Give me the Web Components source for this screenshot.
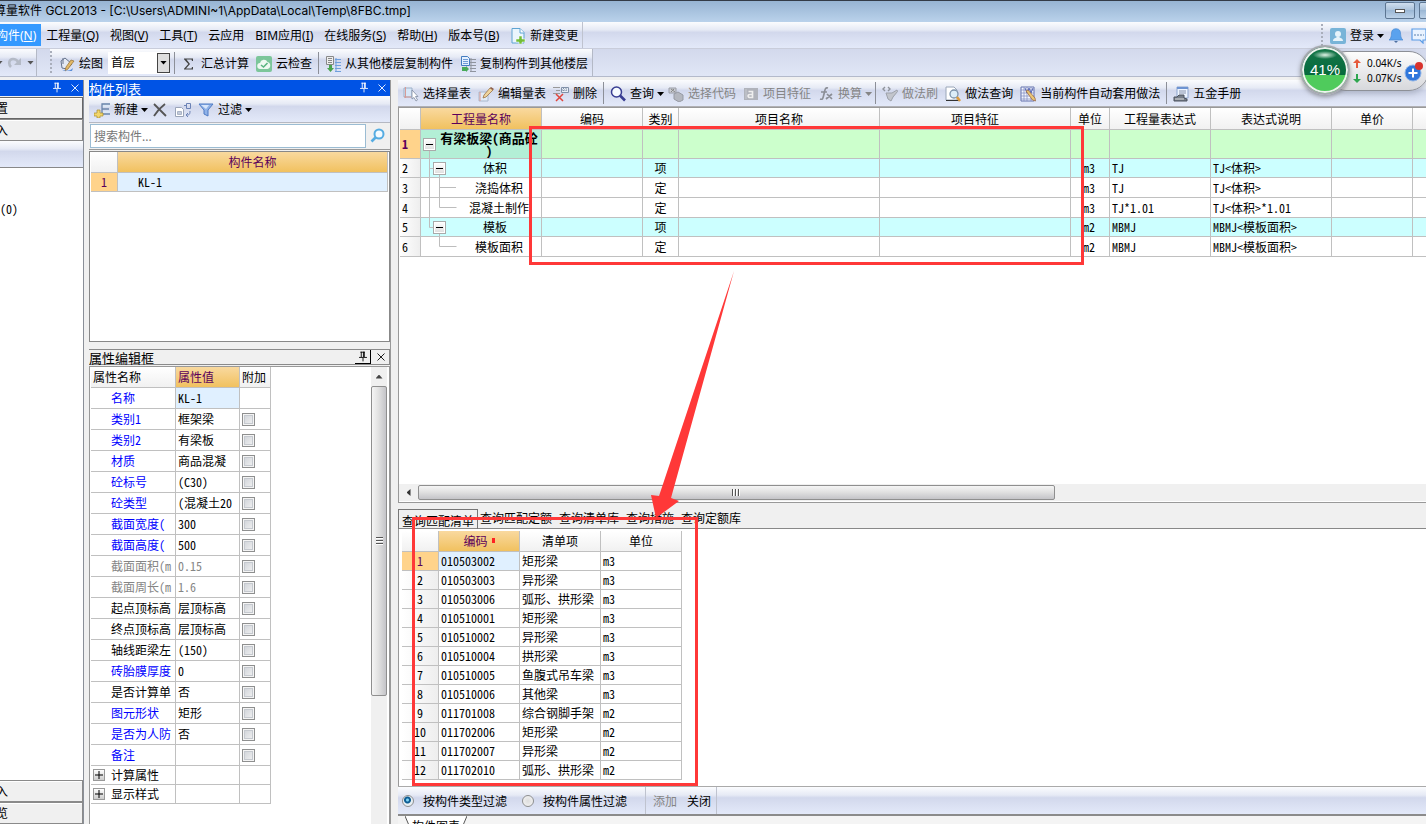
<!DOCTYPE html>
<html lang="zh-CN">
<head>
<meta charset="utf-8">
<title>算量软件 GCL2013</title>
<style>
html,body{margin:0;height:100%}
body{
  --ui:"Noto Sans","Noto Sans CJK SC",sans-serif;
  --song:"Noto Sans Mono CJK SC","Noto Sans CJK SC",monospace;
  --line:#c0c0c0;
  --gold:linear-gradient(#f9d99f,#f1c15f);
  --head:linear-gradient(#fff,#f1f1f1);
  --bar:linear-gradient(#fbfcfe 0,#e6eaf5 30%,#d2d8ec 40%,#dbe1f3 70%,#e3e9f9 100%);
  font:12px/16px var(--ui);color:#000;background:#f0f0f0;overflow:hidden}
</style>
</head>
<body>
<gcl-app></gcl-app>
<script>
const ICONS={
paint:'<path d="M2 5l4-3 7 6-5 5-5-1z" fill="#e4e9f3" stroke="#66738c"/><path d="M4 8V2" stroke="#66738c"/><path d="M12 4l3 1-6 8-3 2 1-4z" fill="#e3b968" stroke="#936f33" stroke-width=".7"/><path d="M2 13c3 2 8 3 12-1l-1 3H5z" fill="#5c8fd8"/>',
sigma:'<path d="M3 2.500h9v2.500h-1l-.5-1.500H5.500L9 8l-4 4.500h5.500l.5-1.500h1v2.500H3v-.8L7.300 8 3 3.300z" fill="#444"/>',
cloud:'<rect width="16" height="16" rx="2" fill="#7cc69a"/><path d="M4.500 13a3 3 0 0 1-.5-6 4 4 0 0 1 7.500-1 3.600 3.600 0 0 1 0 7z" fill="#eef9f1"/><path d="M5 9l2.500 2 4-4" fill="none" stroke="#5ab580" stroke-width="1.600"/>',
copyfrom:'<path d="M1.500 .500h7v8h-7z" fill="#eee" stroke="#888"/><path d="M3 2.500h4M3 4.500h4M3 6.500h4" stroke="#888"/><path d="M4 9h3v3h2l-3.500 4L2 12h2z" fill="#4aa34e"/><path d="M10 3.500h6M10 6.500h6M10 9.500h6M10 12.500h6M10 15.500h6M11 2v14" stroke="#6f9fdc"/>',
copyto:'<path d="M1.500 .500h6l2 2v7h-8z" fill="#e4f0ff" stroke="#437cc0"/><path d="M3 3.500h5M3 5.500h5M3 7.500h5" stroke="#6f9bd6"/><path d="M2 11h4v-1l3 3-3 3v-1H2z" fill="#48aa58"/><path d="M10 3.500h6M10 6.500h6M10 9.500h6M10 12.500h6M10 15.500h6M11 2v14" stroke="#8f949e"/>',
newdoc:'<path d="M2 .500h8l4 4V15H2z" fill="#eaf5fd" stroke="#5fa4d2"/><path d="M10 .500V5h4" fill="#fff" stroke="#5fa4d2"/><path d="M9 8h3v3h3v3h-3v2H9v-2H6v-3h3z" fill="#73bd38" stroke="#fff" stroke-width=".5"/>',
redo:'<path d="M4 12C1 9 2 4 6 4c3 0 4 1 5 3" fill="none" stroke="#b4bac6" stroke-width="2.600"/><path d="M14 3v7H7z" fill="#b4bac6"/>',
newitem:'<path d="M8 1h8v4H8zM8 9h8v4H8z" fill="#dbe7f5"/><path d="M16 2H8v10h8M8 7h7" fill="none" stroke="#6b85aa" stroke-width="1.300"/><path d="M3 8h3v3h3v3H6v2H3v-2H0v-3h3z" fill="#f2d66b" stroke="#ab8d2e" stroke-width=".7"/>',
del:'<path d="M2 2l12 12M13 2C9 5 5 9 2 14" stroke="#555" stroke-width="1.800" fill="none"/>',
copydoc:'<path d="M.500 5.500h6l2 2v7h-8z" fill="#fff" stroke="#9aa4b8"/><path d="M2.500 9.500h4v3h-4z" fill="#c2cada" stroke="#aab4c6"/><path d="M11.500 1.500h4v5h-4zM11 3.500H9M15 9c0 4-1 4-4 4m2-2l-2 2 2 2" fill="none" stroke="#6c83b6"/>',
funnel:'<path d="M1 2h14L10 8v6l-4-2V8z" fill="#8fb2e8" stroke="#4f7bc4"/><path d="M3 3h8L8 7z" fill="#d6e5fb"/>',
selq:'<path d="M1 2h8v9H1z" fill="#d7e6f7" stroke="#9db0c8"/><path d="M2.500 1v11M1 11h7" stroke="#d79b97" fill="none"/><path d="M9 4v9l2-1.500 2 3.500 1.500-1-2-3.500H15z" fill="#fff" stroke="#7e89a0" stroke-width=".8"/>',
edit:'<path d="M1 6h9v9H1z" fill="#e1ebf7" stroke="#aab8cc"/><path d="M2 6v9" stroke="#dd9891"/><path d="M6 9l6-7 3 2-7 7-3 1z" fill="#efd49d" stroke="#9b7245" stroke-width=".8"/><path d="M12 2l1-1 3 2-1 1z" fill="#8b5a45"/>',
rowdel:'<path d="M0 1.500h7M3 4.500h4M0 7.500h7" stroke="#999"/><path d="M8.500 1.500h7v5h-7z" fill="#e8eef6" stroke="#8190a7"/><path d="M9 4h6M10.500 2v4M13 2v4" stroke="#8190a7" stroke-dasharray="1 1"/><path d="M3 8l7 7M10 8l-7 7" stroke="#e0453d" stroke-width="1.500"/>',
search:'<circle cx="6.500" cy="6" r="5" fill="#f6fbff" stroke="#383d92" stroke-width="1.500"/><path d="M10 9.500l5 5" stroke="#383d92" stroke-width="2.600"/>',
code:'<path d="M1 2h7v5H1z" fill="#c9ccd3" stroke="#9a9da6"/><path d="M3 3l4 3M6 3L3 6" stroke="#888"/><path d="M6 8l4-2 5 3v5l-4 2-5-3z" fill="#b4b7bf" stroke="#969aa4"/>',
feature:'<path d="M1 2h14v12H1z" fill="#b0b3bb"/><path d="M5.500 5.500h4v6H7c-2.500 0-2.500-3 0-3h2.500" fill="none" stroke="#eee" stroke-width="1.700"/><path d="M3 3v10" stroke="#c7cad0"/>',
fx:'<path d="M10 2C7 1 7 4 6 8s-1 6-4 5M3 6h6M9 8l5 5M14 8l-6 5" fill="none" stroke="#8b8e96" stroke-width="1.700"/>',
brush:'<path d="M3 1L1 3l2 2M6 1l2 2-2 2" fill="none" stroke="#8f939b" stroke-width="1.400"/><path d="M4 7h6l5-3 .5 1.500L11 11l-2 4-3-2z" fill="#c2c5cc" stroke="#9da1aa"/>',
docfind:'<path d="M1 1h8l3 3v10H1z" fill="#fff" stroke="#9aa6b8"/><path d="M1 14.500h13" stroke="#333"/><circle cx="9" cy="8" r="4" fill="#dcedf8" stroke="#7c93ab" stroke-width="1.300"/><path d="M12 11l3 4" stroke="#dc9b3d" stroke-width="2.500"/>',
auto:'<path d="M1 1h13v14H1z" fill="#f3f6ff" stroke="#6572ad"/><path d="M1 4h13M1 7h13M1 10h13M1 13h13M4 1v14M7 1v14M11 1v14" stroke="#7b88bd" stroke-width=".7"/><path d="M5 2l2 5 2-5 2 5 2-5" stroke="#5767b5" fill="none"/><path d="M6 5l2-1 7 8 .5 3-3-1z" fill="#eac774" stroke="#9a6848" stroke-width=".8"/>',
manual:'<path d="M4 1h11v11H4z" fill="#edf4ff" stroke="#8ca4cc"/><path d="M4 2h11" stroke="#6d93d2" stroke-width="2"/><path d="M6 5h7M6 7h7" stroke="#8792aa"/><path d="M1 11h3l2-2h5v3l3 1v2H1z" fill="#777f89" stroke="#4c535e"/><path d="M2 13h9" stroke="#ddd"/>',
user:'<rect width="16" height="16" rx="2" fill="#78b4d8"/><circle cx="8" cy="6" r="3" fill="#e6f3fa"/><path d="M3 13c0-3 3-3 4-4h2c1 1 4 1 4 4z" fill="#e6f3fa"/>',
bell:'<path d="M1 12c3-2 2-7 3-9 1-3 7-3 8 0 1 2 0 7 3 9z" fill="#5aa2ee" stroke="#4a8bd2" stroke-width=".7"/><path d="M6 13h4l-2 2z" fill="#4d6fa0"/>',
chat:'<path d="M1 1h14v11h-3v3l-3-3H1z" fill="#e9f3ff" stroke="#5b9ce6" stroke-width="1.200"/><path d="M3 7h10" stroke="#5b80ae" stroke-dasharray="2 1"/>',
find:'<circle cx="9" cy="6" r="4.500" fill="#f3faff" stroke="#55ace2" stroke-width="2"/><path d="M6 9l-4.500 4.500" stroke="#55ace2" stroke-width="2.600"/>',
pin:'<path d="M5 2.500h5M6 2v6M9.500 2v6M8.500 2v6M3.500 8.500h9M8 9v4" fill="none" stroke="currentColor"/>',
close:'<path d="M4 4l8 8M12 4l-8 8" stroke="currentColor" fill="none"/>'
};
const svg=(n,s=16)=>`<svg width="${s}" height="${s}" viewBox="0 0 16 16" aria-hidden="true">${ICONS[n]}</svg>`;
const RESET=`<style>*{box-sizing:border-box}button,input,select{font:inherit;color:inherit;margin:0;padding:0;border:0;background:none}svg{display:block;flex:none}:host{display:block}</style>`;
function define(name,render){
  customElements.define(name,class extends HTMLElement{
    connectedCallback(){
      if(this.shadowRoot)return;
      const t=document.createElement('template');
      t.innerHTML=RESET+render(this);
      this.attachShadow({mode:'open'}).append(t.content.cloneNode(true));
    }
  });
}

define('tool-button',el=>`<style>
:host{flex:none}
button{display:flex;align-items:center;gap:4px;height:22px;padding-top:2px;white-space:nowrap}
button:disabled{color:#858585}
i{width:7px;height:4px;margin:0 -3px 0 -1px;background:currentColor;clip-path:polygon(0 0,100% 0,50% 100%)}
</style><button ${el.hasAttribute('off')?'disabled':''} ${el.hasAttribute('label')?`aria-label="${el.getAttribute('label')}"`:''}>${svg(el.getAttribute('icon'))}<slot></slot>${el.hasAttribute('caret')?'<i></i>':''}</button>`);

define('tool-sep',()=>`<style>:host{flex:none;width:1px;height:22px;background:#8c8f98;margin:0 -1px}</style>`);
define('tool-grip',()=>`<style>:host{flex:none;width:2px;align-self:stretch;margin:2px 0;background:repeating-linear-gradient(#a9aebb 0 2px,transparent 2px 4px)}</style>`);

define('panel-title',el=>`<style>
:host{flex:none;height:16px;font:13px/15px var(--song);background:${el.hasAttribute('plain')?'#f0f0f0':'#0053e5'};color:${el.hasAttribute('plain')?'#000':'#fff'};${el.hasAttribute('plain')?'border:1px solid #8a8a8a;border-left:0':''}}
div{display:flex;height:100%;gap:2px;align-items:center}
span{flex:1;white-space:nowrap}
button{width:16px;height:14px;display:flex;align-items:center;justify-content:center}
.pin{${el.hasAttribute('plain')?'border-right:1px solid #000;border-bottom:1px solid #000':''}}
</style><div><span><slot></slot></span><button class="pin" aria-label="固定">${svg('pin',14)}</button><button aria-label="关闭面板">${svg('close',14)}</button></div>`);

define('win-title',()=>`<style>
:host{flex:none;height:22px;background:linear-gradient(#97b4d3,#bad2eb);border-top:1px solid #333b47;overflow:hidden}
div{display:flex;height:100%;justify-content:space-between}
span{margin-left:-6px;line-height:20px;white-space:nowrap;font-family:Inter,"Noto Sans CJK SC",sans-serif}
nav{display:flex;gap:4px;margin:1px -23px 2px 0}
button{width:30px;height:17px;border:1px solid #5d7692;border-radius:2px;background:linear-gradient(#cfdeee,#a9c1da 50%,#9cb8d5 50%,#bcd2e8);display:grid;place-items:center}
b{width:10px;height:4px;border:1px solid #555;background:#fff}
</style><div><span>算量软件 GCL2013 - [C:\\Users\\ADMINI~1\\AppData\\Local\\Temp\\8FBC.tmp]</span><nav><button aria-label="最小化"><b></b></button><button aria-label="最大化"></button></nav></div>`);

define('menu-bar',()=>`<style>
:host{flex:none;height:27px;background:var(--bar);border-bottom:1px solid #c9cddb}
.row{display:flex;height:26px;align-items:center}
nav{display:flex;align-items:center;gap:11px;height:26px;padding-right:4px;border-right:1px solid #bfc3cf}
nav button{white-space:nowrap;height:22px;padding-top:2px}
nav .on{background:#3399ff;color:#fff;padding-right:5px;margin:0 -6px 0 -4px}
.sp{flex:1}
.acct{display:flex;align-items:center;gap:7px;height:26px;margin-right:-1px}
</style><div class="row"><nav><button class="on">构件(<u>N</u>)</button><button>工程量(<u>Q</u>)</button><button>视图(<u>V</u>)</button><button>工具(<u>T</u>)</button><button>云应用</button><button>BIM应用(<u>I</u>)</button><button>在线服务(<u>S</u>)</button><button>帮助(<u>H</u>)</button><button>版本号(<u>B</u>)</button><tool-button icon="newdoc">新建变更</tool-button></nav><span class="sp"></span><div class="acct"><tool-grip></tool-grip><tool-button icon="user" caret>登录</tool-button><tool-button icon="bell" label="通知"></tool-button><tool-button icon="chat" label="消息"></tool-button></div></div>`);

define('main-tools',()=>`<style>
:host{flex:none;height:28px;background:linear-gradient(#d3d9ec,#e0e6f6);border-bottom:1px solid #b4bacb}
.row,.a,.b{display:flex;height:27px;align-items:center}
.a{gap:4px;width:37px;overflow:hidden;border-right:1px solid #b4b9c6;background:var(--bar)}
.a i{width:7px;height:4px;background:#555;clip-path:polygon(0 0,100% 0,50% 100%);flex:none}
.a i:first-child{margin-left:-4px}
.b{gap:7px;margin-left:13px;padding-right:4px;background:var(--bar);border-right:1px solid #b4b9c6}
.pick{position:relative;width:62px;height:22px;margin:0 -2px}
select{width:62px;height:22px;background:#fff;padding-left:3px;appearance:none;font-size:12px}
.pick i{position:absolute;right:0;top:1px;width:13px;height:20px;border:1px solid #444;background:#dedede;display:grid;place-items:center;pointer-events:none}
.pick i::after{content:"";width:7px;height:4px;background:#000;clip-path:polygon(0 0,100% 0,50% 100%)}
</style><div class="row"><div class="a"><i></i>${svg('redo')}<i></i></div><div class="b"><tool-grip></tool-grip><tool-button icon="paint">绘图</tool-button><div class="pick"><select aria-label="楼层"><option>首层</option></select><i></i></div><tool-sep></tool-sep><tool-button icon="sigma">汇总计算</tool-button><tool-button icon="cloud">云检查</tool-button><tool-sep></tool-sep><tool-button icon="copyfrom">从其他楼层复制构件</tool-button><tool-button icon="copyto">复制构件到其他楼层</tool-button></div></div>`);

define('module-nav',()=>`<style>
:host{flex:none;width:84px;display:flex;flex-direction:column;overflow:hidden;font-family:var(--song);border-right:1px solid #8a8f98}
button{flex:none;display:block;width:100%;height:22px;text-align:left;background:#f0f0f0;border:1px solid #8a8a8a;border-width:1px 1px 1px 0;box-shadow:inset 0 1px #fff;white-space:nowrap;text-indent:-4px}
.top{border-color:#666;margin-top:1px}
.bar{flex:none;height:27px;background:var(--bar);border-bottom:1px solid #888}
.tree{flex:1;background:#fff;padding-top:33px}
</style><panel-title></panel-title><button class="top">置</button><button>入</button><div class="bar"></div><div class="tree">(0)</div><button>入</button><button>览</button>`);

define('component-list',()=>`<style>
:host{flex:none;display:flex;flex-direction:column}
.tools{display:flex;gap:7px;align-items:center;height:27px;padding-left:5px;background:var(--bar);border-bottom:1px solid #b5b8c2}
.find{display:flex;height:27px;border-bottom:1px solid #999;padding:1px 0}
input{flex:1;background:#fff;border:1px solid #9bbcd3;padding:0 3px;height:24px;margin-left:1px}
input::placeholder{color:#777;opacity:1}
.find button{width:24px;display:grid;place-items:center}
.box{height:191px;margin-top:1px;border:1px solid #888;background:#fff;padding:0 1px}
table{width:100%;border-collapse:separate;border-spacing:0;table-layout:fixed;font-family:var(--song)}
th,td{border:solid var(--line);border-width:0 1px 1px 0;padding:0;font-weight:400;height:19px}
thead th{height:21px;background:var(--gold);color:#5b005b}
thead th:first-child{width:27px;background:var(--head)}
tbody th{background:#ffd38b;color:#5b005b}
td{background:#e0f0ff;padding-left:20px}
</style><panel-title>构件列表</panel-title><div class="tools"><tool-button icon="newitem" caret>新建</tool-button><tool-button icon="del" label="删除"></tool-button><tool-button icon="copydoc" label="复制"></tool-button><tool-button icon="funnel" caret>过滤</tool-button></div><div class="find"><input aria-label="搜索构件" placeholder="搜索构件..."><button aria-label="搜索">${svg('find')}</button></div><div class="box"><table><thead><tr><th></th><th>构件名称</th></tr></thead><tbody><tr><th>1</th><td>KL-1</td></tr></tbody></table></div>`);

const PROPS=[['名称','KL-1','b',1],['类别1','框架梁','b'],['类别2','有梁板','b'],['材质','商品混凝','b'],['砼标号','(C30)','b'],['砼类型','(混凝土20','b'],['截面宽度(','300','b'],['截面高度(','500','b'],['截面面积(m','0.15','g'],['截面周长(m','1.6','g'],['起点顶标高','层顶标高',''],['终点顶标高','层顶标高',''],['轴线距梁左','(150)',''],['砖胎膜厚度','0','b'],['是否计算单','否',''],['图元形状','矩形','b'],['是否为人防','否','b'],['备注','','b']];
define('property-editor',()=>`<style>
:host{flex:1;display:flex;flex-direction:column;min-height:0;margin-top:7px}
.box{flex:1;min-height:0;overflow:hidden;margin-top:1px;border:1px solid #999;border-bottom:0;background:#fff;padding:0 2px 0 1px;display:flex;justify-content:space-between}
table{width:180px;border-collapse:separate;border-spacing:0;table-layout:fixed;font-family:var(--song);align-self:flex-start}
th,td{border:solid var(--line);border-width:0 1px 1px 0;padding:0 0 0 2px;font-weight:400;text-align:left;height:21px;overflow:hidden;white-space:pre;line-height:16px}
thead th{background:var(--head)}
thead th:nth-child(2){background:var(--gold);color:#5b005b}
tbody th{padding-left:20px}
.b th{color:#00f}.g{color:#858585}
.sel{background:#e0f0ff}
td input{appearance:none;display:block;width:13px;height:13px;border:1px solid #8e8f8f;background:linear-gradient(135deg,#ccd0d6,#f4f4f4);box-shadow:inset 0 0 0 1px #f4f4f4,inset 0 0 0 2px #c5c9cf}
.x th,.x td{height:19px}
.x div{display:flex;gap:6px;margin-left:-18px;align-items:center}
.x button{width:12px;height:12px;border:1px solid #999;background:linear-gradient(#fff,#ccc);display:grid;place-items:center}
.sb{width:16px;display:flex;flex-direction:column;background:#f0f0f0}
.up{height:19px;display:grid;place-items:center}
.up::after{content:"";width:7px;height:4px;background:#444;clip-path:polygon(50% 0,100% 100%,0 100%)}
.thumb{height:310px;border:1px solid #8f8f8f;border-radius:2px;background:linear-gradient(90deg,#f5f5f5,#e2e2e2 45%,#c4c4c8);display:grid;place-items:center}
.thumb::after{content:"";width:7px;height:8px;background:repeating-linear-gradient(#555 0 1px,#fff 1px 2px,transparent 2px 3px)}
</style><panel-title plain>属性编辑框</panel-title><div class="box"><table><colgroup><col style="width:85px"><col style="width:64px"><col style="width:31px"></colgroup><thead><tr><th>属性名称</th><th>属性值</th><th>附加</th></tr></thead><tbody>${PROPS.map(p=>`<tr class="${p[2]}"><th>${p[0]}</th><td class="${p[3]?'sel':''}">${p[1]}</td><td>${p[3]?'':`<input type="checkbox" aria-label="附加 ${p[0]}">`}</td></tr>`).join('')}${['计算属性','显示样式'].map(n=>`<tr class="x"><th><div><button aria-label="展开${n}"><svg width="8" height="8"><path d="M0 4h8M4 0v8" stroke="#000"/></svg></button>${n}</div></th><td></td><td></td></tr>`).join('')}</tbody></table><div class="sb"><span class="up"></span><span class="thumb"></span></div></div>`);

define('grid-tools',()=>`<style>
:host{flex:none;height:27px;background:var(--bar);border-bottom:1px solid #b0b0b4;overflow:hidden}
div{display:flex;height:26px;align-items:center;gap:7px;padding-left:5px}
</style><div><tool-button icon="selq">选择量表</tool-button><tool-button icon="edit">编辑量表</tool-button><tool-button icon="rowdel">删除</tool-button><tool-sep></tool-sep><tool-button icon="search" caret>查询</tool-button><tool-button icon="code" off>选择代码</tool-button><tool-button icon="feature" off>项目特征</tool-button><tool-button icon="fx" off caret>换算</tool-button><tool-sep></tool-sep><tool-button icon="brush" off>做法刷</tool-button><tool-button icon="docfind">做法查询</tool-button><tool-button icon="auto">当前构件自动套用做法</tool-button><tool-sep></tool-sep><tool-button icon="manual">五金手册</tool-button></div>`);

const tree=(w,h,d,lvl)=>`<span class="g" style="width:${w}px"><svg width="${w}" height="${h}"><path d="${d}" fill="none" stroke="#bdbdbd"/></svg>${lvl?`<button class="l${lvl}" aria-label="折叠"></button>`:''}</span>`;
const QROWS=[
['r1',tree(16,28,'M8.500 14v15',1),'有梁板梁(商品砼<br>)','','','',''],
['r2 c',tree(28,18,'M8.500 0v19M8 9.500h10M18.500 9v10',2),'体积','项','m3','TJ','TJ&lt;体积&gt;'],
['r3',tree(36,19,'M8.500 0v20M18.500 0v20M18 9.500h17'),'浇捣体积','定','m3','TJ','TJ&lt;体积&gt;'],
['r3',tree(36,19,'M8.500 0v20M18.500 0v9.500h17'),'混凝土制作','定','m3','TJ*1.01','TJ&lt;体积&gt;*1.01'],
['r2 c',tree(28,18,'M8.500 0v9.500h10v10',2),'模板','项','m2','MBMJ','MBMJ&lt;模板面积&gt;'],
['r3',tree(36,19,'M18.500 0v9.500h17'),'模板面积','定','m2','MBMJ','MBMJ&lt;模板面积&gt;']];
const QC=[21,121,101,36,201,191,39,101,121,81,81];
define('quantity-grid',()=>`<style>
:host{flex:1;min-height:0;display:flex;flex-direction:column;background:#fff;border:1px solid #999;border-right:0;overflow:hidden}
.body{flex:1;min-height:0;overflow:hidden;padding:0 0 0 1px}
table{width:1094px;border-collapse:separate;border-spacing:0;table-layout:fixed;font-family:var(--song)}
th,td{border:solid var(--line);border-width:0 1px 1px 0;padding:0;font-weight:400;overflow:hidden;white-space:nowrap;line-height:16px}
thead th{height:22px;background:var(--head)}
thead th:nth-child(2){background:var(--gold);color:#5b005b}
tbody th{background:linear-gradient(90deg,#fff,#eee);text-align:left;padding-left:2px}
.r1 td{height:29px;background:#cfc}.r1 th{background:#ffd38b;color:#5b005b;font-weight:700}
.r1 td:nth-child(2){background:#b3efd6}
.r2 td{height:19px}.r3 td{height:20px}.c td{background:#cff}
.n{display:flex;align-items:center;overflow:hidden}
.n b{flex:1;font-weight:400;text-align:center}
.r1 b{font-weight:700;font-size:13px;line-height:13px}
.g{position:relative;flex:none}
.g button{position:absolute;width:13px;height:13px;border:1px solid #aaa;background:linear-gradient(#000,#000) 2px 5px/7px 1px no-repeat,linear-gradient(#fff,#ddd);box-shadow:inset 0 0 0 1px #fff}
.l1{left:2px;top:8px}.l2{left:12px;top:3px}
.m{text-align:center}.t{padding-left:2px}.u{padding-left:12px}
.sb{flex:none;height:17px;display:flex;background:#f0f0f0;margin-bottom:1px}
.lf{width:19px;display:grid;place-items:center}
.lf::after{content:"";width:4px;height:7px;background:#333;clip-path:polygon(0 50%,100% 0,100% 100%)}
.thumb{width:62%;height:15px;margin-top:1px;border:1px solid #8f8f8f;border-radius:2px;background:linear-gradient(#f5f5f5,#e2e2e2 45%,#c4c4c8);display:grid;place-items:center}
.thumb::after{content:"";width:8px;height:7px;background:repeating-linear-gradient(90deg,#555 0 1px,#fff 1px 2px,transparent 2px 3px)}
</style><div class="body"><table><colgroup>${QC.map(w=>`<col style="width:${w}px">`).join('')}</colgroup><thead><tr><th></th><th>工程量名称</th><th>编码</th><th>类别</th><th>项目名称</th><th>项目特征</th><th>单位</th><th>工程量表达式</th><th>表达式说明</th><th>单价</th><th></th></tr></thead><tbody>${QROWS.map((r,i)=>`<tr class="${r[0]}"><th>${i+1}</th><td><div class="n">${r[1]}<b>${r[2]}</b></div></td><td></td><td class="m">${r[3]}</td><td></td><td></td><td class="u">${r[4]}</td><td class="t">${r[5]}</td><td class="t">${r[6]}</td><td></td><td></td></tr>`).join('')}</tbody></table></div><div class="sb"><span class="lf"></span><span class="thumb"></span></div>`);

const MATCH=['010503002 矩形梁 m3','010503003 异形梁 m3','010503006 弧形、拱形梁 m3','010510001 矩形梁 m3','010510002 异形梁 m3','010510004 拱形梁 m3','010510005 鱼腹式吊车梁 m3','010510006 其他梁 m3','011701008 综合钢脚手架 m2','011702006 矩形梁 m2','011702007 异形梁 m2','011702010 弧形、拱形梁 m2'].map(s=>s.split(' '));
define('match-panel',()=>`<style>
:host{flex:none;display:flex;flex-direction:column;margin-top:6px;font-family:var(--song)}
.tabs{display:flex;gap:7px;height:20px;border-bottom:1px solid #888;align-items:flex-start}
.tabs button{height:17px;white-space:nowrap}
.tabs .on{height:20px;padding:3px 3px 0 3px;border:1px solid #777;border-width:1px 1px 0 1px;margin-right:-5px}
.box{background:#fff;border-left:1px solid #999;padding:2px 0 5px 3px;height:257px}
table{width:280px;border-collapse:separate;border-spacing:0;table-layout:fixed}
th,td{border:solid var(--line);border-width:0 1px 1px 0;padding:0 0 0 2px;height:19px;font-weight:400;white-space:nowrap;line-height:16px}
thead th{height:21px;background:var(--head);padding:0}
thead th:nth-child(2){background:var(--gold);color:#5b005b}
sup{display:inline-block;width:3px;height:5px;background:#f22;margin-left:4px;vertical-align:3px}
tbody th{background:linear-gradient(90deg,#fff,#eee);padding:0}
tbody tr:first-child th{background:#ffd38b;color:#5b005b}
tbody tr:first-child td:nth-child(2){background:#e0f0ff}
form{display:flex;height:30px;align-items:center;background:var(--bar);border-top:1px solid #aaa;border-bottom:2px solid #8b8b8b;padding-left:4px}
label{display:flex;gap:9px;align-items:center;margin-right:15px;white-space:nowrap}
label input{appearance:none;width:12px;height:12px;border-radius:50%;border:1px solid #8e8f8f;background:radial-gradient(#ddd,#f6f6f6)}
label input:checked{background:radial-gradient(circle at 45% 40%,#7fd4f5 0 1px,#0c5c93 2px 3px,#e6eef3 4px)}
form div{display:flex;gap:10px;align-items:center;height:100%;margin-left:3px;padding:0 5px 0 7px;border:solid #bfc3cf;border-width:0 1px}
form div button:disabled{color:#858585}
</style><div class="tabs"><button class="on">查询匹配清单</button><button>查询匹配定额</button><button>查询清单库</button><button>查询措施</button><button>查询定额库</button></div><div class="box"><table><colgroup><col style="width:37px"><col style="width:81px"><col style="width:81px"><col style="width:81px"></colgroup><thead><tr><th></th><th>编码<sup></sup></th><th>清单项</th><th>单位</th></tr></thead><tbody>${MATCH.map((r,i)=>`<tr><th>${i+1}</th><td>${r[0]}</td><td>${r[1]}</td><td>${r[2]}</td></tr>`).join('')}</tbody></table></div><form><label><input type="radio" name="f" checked>按构件类型过滤</label><label><input type="radio" name="f">按构件属性过滤</label><div><button type="button" disabled>添加</button><button type="button">关闭</button></div></form>`);

define('sheet-tab',()=>`<style>
:host{flex:none;height:8px;overflow:hidden;font-family:var(--song);background:#f4f4f4}
div{display:flex;margin-left:7px}
button{height:18px;width:50px;background:#fff;text-align:center;white-space:nowrap;padding-top:1px}
svg path{fill:#fff;stroke:#555}
</style><div><svg width="6" height="18"><path d="M0 0l6 14V20h1V0"/></svg><button>构件图表</button><svg width="6" height="18"><path d="M6 0L0 14V20h-1V0"/></svg></div>`);

define('net-speed',()=>`<style>
:host{position:absolute;right:-6px;top:44px;width:132px;height:52px}
.pill{position:absolute;left:26px;right:3px;top:7px;height:40px;border:1px solid #8d9097;border-radius:20px;background:linear-gradient(#fdfdfd,#d7d8dc);box-shadow:0 3px 5px #8f97aa80;display:flex;align-items:center;padding-left:26px;font-size:10px;line-height:15px}
.pill p{margin:0;display:flex;gap:6px;align-items:center;white-space:nowrap}
.disk{position:absolute;left:0;top:1px;width:50px;height:50px;border-radius:50%;border:2px solid #a5a9ae;background:radial-gradient(ellipse 12px 4px at 50% 8px,#dff3e6,transparent),linear-gradient(#16784a,#06693c 60%,#4fcb5c 60%);box-shadow:inset 0 0 0 2px #eef3ef,0 2px 4px #5558;color:#fff;display:grid;place-items:center;font:15px/16px "Liberation Sans",sans-serif}
.plus{position:absolute;right:6px;top:16px}
</style><div class="pill"><div><p><svg width="8" height="9"><path d="M4 0l4 4H5v5H3V4H0z" fill="#e65a3c"/></svg>0.04K/s</p><p><svg width="8" height="9"><path d="M4 9l4-4H5V0H3v5H0z" fill="#2fa64f"/></svg>0.07K/s</p></div></div><div class="disk">41%</div><svg class="plus" width="22" height="24"><circle cx="9" cy="13" r="8" fill="#2f77dc" stroke="#8fb3e6"/><path d="M9 8.500v9M4.500 13h9" stroke="#fff" stroke-width="2"/><circle cx="15" cy="6" r="4" fill="#d8332d"/></svg>`);

define('mark-layer',()=>`<style>:host{position:absolute;left:0;top:0;pointer-events:none}</style><svg width="1110" height="800"><g fill="none" stroke="#ff3838" stroke-width="3"><path d="M530.500 127.500h552v136h-552z"/><path d="M413.500 518.500h283v266h-283z"/></g><path d="M734 271L671 498l8 3-23 17-5-23 8 1z" fill="#ff3838"/></svg>`);

define('gcl-app',()=>`<style>
:host{position:relative;display:flex;flex-direction:column;height:100vh;overflow:hidden}
main{flex:1;min-height:0;display:flex;margin-top:3px}
.mid{flex:none;width:302px;margin-left:5px;display:flex;flex-direction:column;border-right:1px solid #999}
.work{flex:1;min-width:0;margin-left:7px;display:flex;flex-direction:column}
</style><win-title></win-title><menu-bar></menu-bar><main-tools></main-tools><main><module-nav></module-nav><div class="mid"><component-list></component-list><property-editor></property-editor></div><div class="work"><grid-tools></grid-tools><quantity-grid></quantity-grid><match-panel></match-panel><sheet-tab></sheet-tab></div></main><net-speed></net-speed><mark-layer></mark-layer>`);
</script>
</body>
</html>
